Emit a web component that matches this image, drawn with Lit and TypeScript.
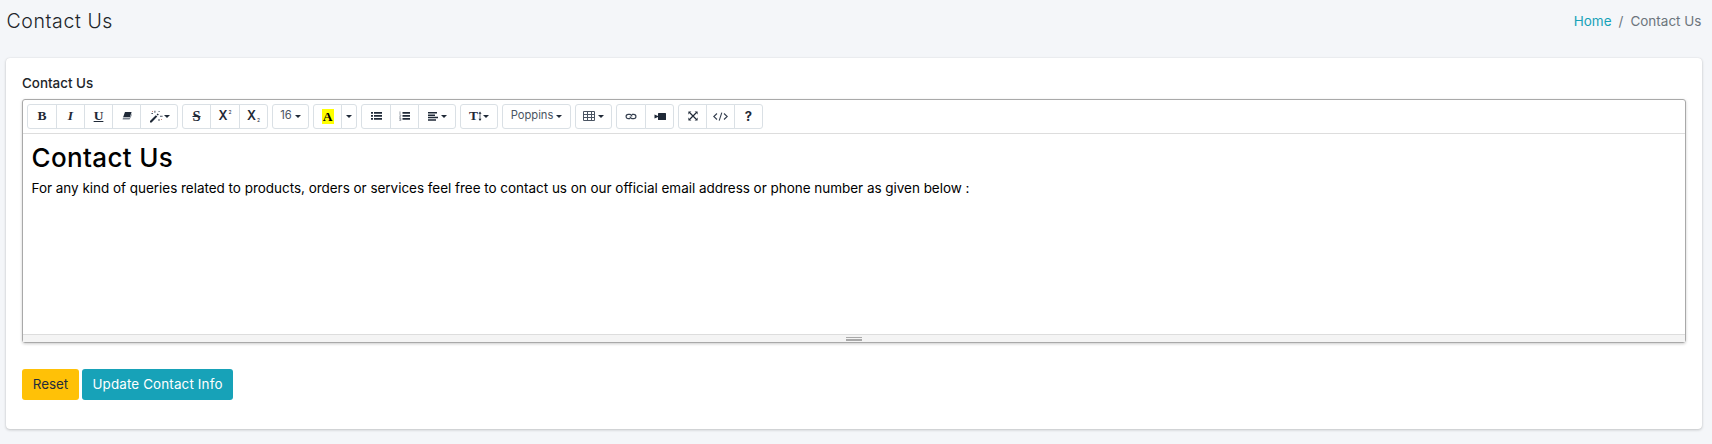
import { LitElement, html, css, svg } from "lit";
import { customElement } from "lit/decorators.js";

const icon = (body: unknown, w = 12, h = 12) =>
  html`<svg class="ic" width=${w} height=${h} viewBox="0 0 ${w} ${h}" fill="#1f2937" stroke="none">${body}</svg>`;
const caret = html`<i class="caret"></i>`;

const eraser = icon(svg`<path d="M4 2h6.6L9 7H2.2z"/><path d="M2 7.4h6.8L10.6 3v2.5L8.6 9.6H1.6z" fill="#7b838f"/>`);
const magic = icon(svg`<path d="M1 11 6.8 5.2l1.5 1.4L2.6 12.4H1z"/><path d="M7.6 4.4l1-1 1.2 1.2-1 1z"/><g fill="#4b5563"><path d="M5.4 .8h1v2h-1zM2.4 3h1.6v1H2.4zM9.6 1h1v1h-1zM11 5.8h2.6v1H11zM9.5 9h1v2h-1z"/><path d="M3 1h1v1H3zM12 9h1v1h-1z" fill="#c9877c"/></g>`, 14, 13);
const list = icon(svg`<path d="M0 1h2v1.7H0zM0 4h2v1.7H0zM0 7h2v1.7H0zM3 1h8v1.7H3zM3 4h8v1.7H3zM3 7h8v1.7H3z"/>`, 11, 10);
const ordered = icon(svg`<path d="M3.5 1h7.5v1.7H3.5zM3.5 4h7.5v1.7H3.5zM3.5 7h7.5v1.7H3.5z"/><path d="M1 .4v2.6M.3 3.9h1.4v1L.4 6.2h1.5M.3 7.4h1.5v2.2H.3M.6 8.4h1" fill="none" stroke="#6b7280" stroke-width=".7"/>`, 11, 10);
const align = icon(svg`<path d="M0 1h9v1.5H0zM0 3.4h7v1.5H0zM0 5.8h10v1.5H0zM0 8.2h8v1.5H0z"/>`, 10, 10);
const updown = icon(svg`<path d="M2 2v6.5" stroke="#1f2937" stroke-width=".7"/><path d="M2 .5 3.5 2.8h-3zM2 10l1.5-2.3h-3z"/>`, 4, 11);
const table = icon(svg`<path d="M.5 .5h11v9H.5zM.5 3.5h11M.5 6.5h11M4.5 .5v9M8.5 .5v9" fill="none" stroke="#4b5563"/>`, 12, 10);
const link = icon(svg`<path d="M5 6.6H3.2a2.1 2.1 0 0 1 0-4.2h1.6a2.1 2.1 0 0 1 2 2.1M7 2.4h1.8a2.1 2.1 0 0 1 0 4.2H7.2a2.1 2.1 0 0 1-2-2.1" fill="none" stroke="#374151" stroke-width="1.2"/>`, 12, 9);
const video = icon(svg`<rect x="4" y="1" width="8" height="7" rx=".5"/><path d="M.5 2.4 4 4v1L.5 6.6z"/>`, 12, 9);
const full = icon(svg`<path d="M2 2l6 6M8 2 2 8" stroke="#1f2937" stroke-width="1.2"/><path d="M.4 .4h3l-3 3zM9.6 .4v3l-3-3zM.4 9.6v-3l3 3zM9.6 9.6h-3l3-3z"/>`, 10, 10);
const code = icon(svg`<path d="M4 1.5 .8 4.5 4 7.5M11 1.5l3.2 3-3.2 3M8.8 .6 6.2 8.6" fill="none" stroke="#374151" stroke-width="1.1"/>`, 15, 9);

const groups: { w: number; body: unknown }[][] = [
  [
    { w: 30, body: html`<b class="se">B</b>` },
    { w: 29, body: html`<b class="se it">I</b>` },
    { w: 29, body: html`<span class="se un">U</span>` },
    { w: 29, body: eraser },
    { w: 38, body: html`${magic}<i class="caret near"></i>` },
  ],
  [
    { w: 29, body: html`<b class="se st">S</b>` },
    { w: 30, body: html`<b class="x">X</b><span class="sup">2</span>` },
    { w: 29, body: html`<b class="x">X</b><span class="sub">2</span>` },
  ],
  [{ w: 37, body: html`<span class="num">16</span>${caret}` }],
  [
    { w: 29, body: html`<b class="mark">A</b>` },
    { w: 16, body: html`<i class="caret solo"></i>` },
  ],
  [
    { w: 30, body: list },
    { w: 29, body: ordered },
    { w: 38, body: html`${align}${caret}` },
  ],
  [{ w: 38, body: html`<b class="se">T</b>${updown}<i class="caret near"></i>` }],
  [{ w: 69, body: html`<span class="family">Poppins</span>${caret}` }],
  [{ w: 37, body: html`${table}${caret}` }],
  [{ w: 30, body: link }, { w: 29, body: video }],
  [{ w: 29, body: full }, { w: 29, body: code }, { w: 29, body: html`<b class="q">?</b>` }],
];

@customElement("app-root")
export class AppRoot extends LitElement {
  static styles = css`
    :host {
      display: block;
      height: 444px;
      overflow: hidden;
      box-sizing: border-box;
      padding: 0 10px 0 6px;
      background: #f4f6f9;
      font-family: Inter, sans-serif;
      color: #212529;
    }
    * { box-sizing: border-box; }
    header {
      height: 58px;
      padding: 0 0.5px;
      display: flex;
      justify-content: space-between;
    }
    h1 { margin: 0; font-weight: 300; font-size: 19.5px; line-height: 43px; letter-spacing: 0.6px; white-space: nowrap; }
    nav { display: flex; gap: 7px; font-size: 13.5px; font-weight: 400; line-height: 43px; color: #6c757d; }
    nav a { color: #17a2b8; }
    .card {
      height: 371px;
      padding: 15px 16px;
      background: #fff;
      border-radius: 4px;
      box-shadow: 0 0 1px rgba(0, 0, 0, 0.13), 0 1px 3px rgba(0, 0, 0, 0.2);
    }
    label { display: block; height: 26px; line-height: 21px; font-size: 13.4px; font-weight: 500; }
    .editor {
      height: 244px;
      display: flex;
      flex-direction: column;
      border: 1px solid #a9a9a9;
      border-radius: 3px;
      box-shadow: 0 1px 3px rgba(0, 0, 0, 0.2);
    }
    .bar { height: 34px; padding: 4px; display: flex; gap: 4px; border-bottom: 1px solid #ddd; }
    .group { display: flex; }
    .btn {
      height: 25px;
      padding-bottom: 1px;
      display: flex;
      align-items: center;
      justify-content: center;
      border: 1px solid #dae0e5;
      background: #fff;
      line-height: 1;
      color: #1f2937;
    }
    .btn + .btn { margin-left: -1px; }
    .btn:first-child { border-radius: 3px 0 0 3px; }
    .btn:last-child { border-radius: 0 3px 3px 0; }
    .btn:only-child { border-radius: 3px; }
    .ic { flex: none; display: block; }
    .caret { margin-left: 3px; border: 3px solid transparent; border-top-color: #1f2937; border-bottom: 0; }
    .near { margin-left: 1px; }
    .solo { margin: 0; }
    .se { font-family: "Liberation Serif", serif; font-size: 13.5px; font-weight: 700; }
    .it { font-style: italic; }
    .un { text-decoration: underline; text-decoration-thickness: 1px; text-underline-offset: 1px; }
    .st { font-size: 14.5px; text-decoration: line-through; text-decoration-thickness: 1px; }
    .x { font-size: 12.5px; font-weight: 600; padding-top: 1px; }
    .sup, .sub { font-size: 5px; margin-left: 1px; }
    .sup { margin-top: -8px; }
    .sub { margin-top: 9px; }
    .num, .family { font-size: 11.2px; font-weight: 400; color: #4b5563; }
    .mark { width: 12px; height: 15px; text-align: center; background: #ff0; color: #000; font: 700 13.5px/15px "Liberation Serif", serif; }
    .q { font-size: 13px; font-weight: 700; }
    .page { flex: 1; padding: 8px; padding-left: 8.5px; color: #000; }
    h2 { margin: 0; font-size: 26px; line-height: 31px; font-weight: 500; letter-spacing: 0.35px; }
    p { margin: 5px 0 0; font-size: 13.5px; line-height: 20px; font-weight: 400; letter-spacing: -0.03px; white-space: nowrap; }
    .status {
      height: 8px;
      display: flex;
      flex-direction: column;
      align-items: center;
      gap: 1px;
      padding-top: 2px;
      background: #f4f4f4;
      border-top: 1px solid #ddd;
    }
    .grip { width: 16px; height: 1px; background: #a9a9a9; }
    .thick { height: 2px; }
    .actions { display: flex; gap: 3px; margin-top: 26px; }
    .action {
      width: 57px;
      height: 31px;
      border-radius: 3px;
      background: #ffc107;
      color: #1f2d3d;
      font-size: 13.4px;
      line-height: 31px;
      text-align: center;
      white-space: nowrap;
    }
    .info { width: 151px; background: #17a2b8; color: #fff; letter-spacing: 0.15px; }
  `;

  render() {
    return html`
      <header>
        <h1>Contact Us</h1>
        <nav><a>Home</a><span>/</span><span>Contact Us</span></nav>
      </header>
      <section class="card">
        <label>Contact Us</label>
        <div class="editor">
          <div class="bar">
            ${groups.map(
              (g) => html`<div class="group">
                ${g.map((b) => html`<div class="btn" style="width:${b.w}px">${b.body}</div>`)}
              </div>`
            )}
          </div>
          <div class="page">
            <h2>Contact Us</h2>
            <p>For any kind of queries related to products, orders or services feel free to contact us on our official email address or phone number as given below :</p>
          </div>
          <div class="status"><div class="grip"></div><div class="grip thick"></div></div>
        </div>
        <div class="actions">
          <div class="action">Reset</div>
          <div class="action info">Update Contact Info</div>
        </div>
      </section>
    `;
  }
}
